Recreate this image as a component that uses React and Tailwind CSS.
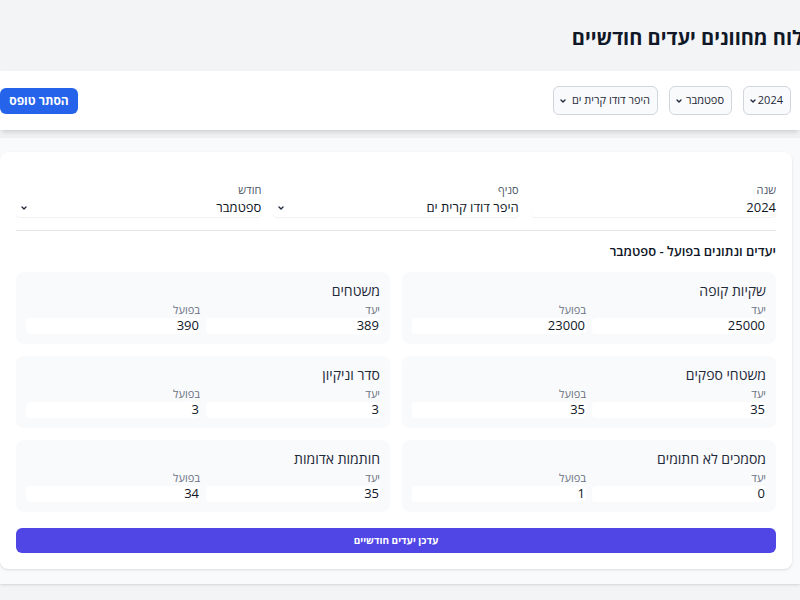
import { ChevronDown } from 'lucide-react';

const goals = [
  { title: 'שקיות קופה', target: '25000', actual: '23000' },
  { title: 'משטחים', target: '389', actual: '390' },
  { title: 'משטחי ספקים', target: '35', actual: '35' },
  { title: 'סדר וניקיון', target: '3', actual: '3' },
  { title: 'מסמכים לא חתומים', target: '0', actual: '1' },
  { title: 'חותמות אדומות', target: '35', actual: '34' },
];

function TopSelect({ value, width }) {
  return (
    <div
      className={`${width} h-[29px] flex items-center justify-between pr-[7px] pl-[5px] border border-gray-300 rounded-md bg-gray-50 text-[11px] text-gray-800 whitespace-nowrap`}
    >
      <span>{value}</span>
      <ChevronDown className="w-2 h-2 shrink-0 text-gray-800" strokeWidth={4} />
    </div>
  );
}

function Field({ label, value, select }) {
  return (
    <div>
      <div className="text-[11px] leading-4 text-gray-600">{label}</div>
      <div className="mt-[1px] h-[18px] flex items-center justify-between pl-1 bg-white rounded-sm shadow-[0_1px_1px_rgba(0,0,0,0.06)] text-[13px] text-gray-900">
        <span>{value}</span>
        {select && <ChevronDown className="w-2 h-2 text-gray-800" strokeWidth={4} />}
      </div>
    </div>
  );
}

function GoalCard({ title, target, actual }) {
  return (
    <div className="bg-gray-50 rounded-lg p-2.5">
      <div className="text-[14px] leading-[18px] text-gray-800">{title}</div>
      <div className="mt-[2px] grid grid-cols-2 gap-[6px]">
        <div>
          <div className="text-[11px] leading-4 text-gray-500">יעד</div>
          <div className="h-4 flex items-center pr-[1px] bg-white rounded-sm text-[13px] text-gray-900">
            {target}
          </div>
        </div>
        <div>
          <div className="text-[11px] leading-4 text-gray-500">בפועל</div>
          <div className="h-4 flex items-center pr-[1px] bg-white rounded-sm text-[13px] text-gray-900">
            {actual}
          </div>
        </div>
      </div>
    </div>
  );
}

export default function App() {
  return (
    <div
      dir="rtl"
      className="w-[800px] h-[600px] overflow-hidden bg-gray-100"
      style={{ fontFamily: '"Open Sans", "Liberation Sans", "DejaVu Sans", sans-serif' }}
    >
      {/* Header */}
      <div className="h-[71px] flex items-center pt-[5px]">
        <h1 className="mr-[-3px] text-[20px] leading-8 font-bold text-gray-900 whitespace-nowrap">
          לוח מחוונים יעדים חודשיים
        </h1>
      </div>

      {/* Filter bar */}
      <div className="h-[59px] bg-white shadow-md flex items-center justify-between pr-[9px]">
        <div className="flex items-center gap-[11px]">
          <TopSelect value="2024" width="w-[48px]" />
          <TopSelect value="ספטמבר" width="w-[63px]" />
          <TopSelect value="היפר דודו קרית ים" width="w-[105px]" />
        </div>
        <button className="w-[78px] h-[26px] rounded-md bg-[#2563eb] text-white text-[12px] font-bold">
          הסתר טופס
        </button>
      </div>

      {/* Form */}
      <div className="mt-2 bg-gray-50 shadow pr-2 pt-[14px] pb-[15px]">
        <div className="w-[792px] bg-white rounded-lg shadow px-4 pt-[30px] pb-4">
          <div className="grid grid-cols-3 gap-3 pb-[13px] border-b border-gray-200">
            <Field label="שנה" value="2024" />
            <Field label="סניף" value="היפר דודו קרית ים" select />
            <Field label="חודש" value="ספטמבר" select />
          </div>

          <h2 className="mt-[10px] text-[13px] leading-5 font-semibold text-gray-900">
            יעדים ונתונים בפועל - ספטמבר
          </h2>

          <div className="mt-[11px] grid grid-cols-2 gap-3">
            {goals.map((g) => (
              <GoalCard key={g.title} {...g} />
            ))}
          </div>

          <button className="mt-4 w-full h-[25px] rounded-md bg-[#4f46e5] text-white text-[10px] font-bold">
            עדכן יעדים חודשיים
          </button>
        </div>
      </div>
    </div>
  );
}
